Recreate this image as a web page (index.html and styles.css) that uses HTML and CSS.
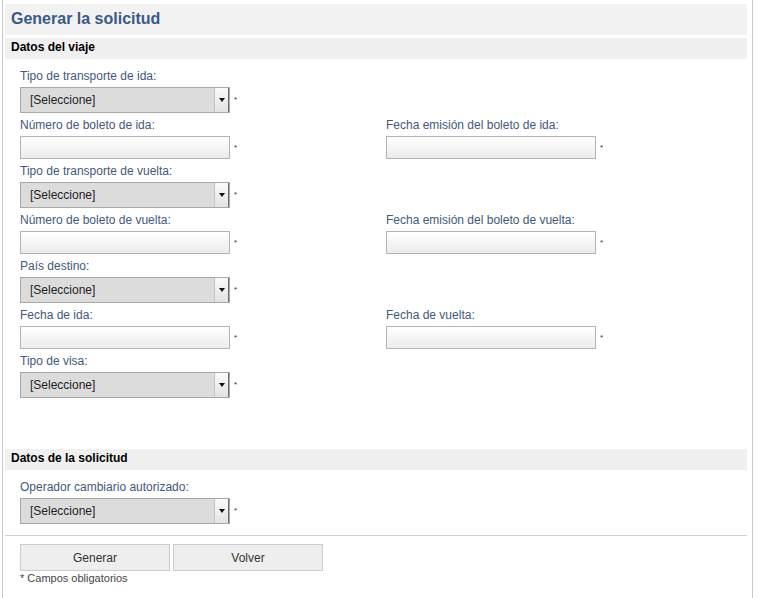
FILE: index.html
```html
<!DOCTYPE html>
<html lang="es">
<head>
<meta charset="utf-8">
<title>Generar la solicitud</title>
<link rel="stylesheet" href="styles.css">
</head>
<body>
<div class="page">
  <h1 class="title">Generar la solicitud</h1>

  <h2 class="section">Datos del viaje</h2>
  <div class="form form-viaje">
    <div class="row">
      <div class="field">
        <label class="lbl">Tipo de transporte de ida:</label>
        <div class="ctl"><div class="select"><span class="sel-text">[Seleccione]</span><span class="arrow"></span></div><span class="req">*</span></div>
      </div>
    </div>
    <div class="row">
      <div class="field">
        <label class="lbl">Número de boleto de ida:</label>
        <div class="ctl"><div class="input"></div><span class="req">*</span></div>
      </div>
      <div class="field">
        <label class="lbl">Fecha emisión del boleto de ida:</label>
        <div class="ctl"><div class="input"></div><span class="req">*</span></div>
      </div>
    </div>
    <div class="row">
      <div class="field">
        <label class="lbl">Tipo de transporte de vuelta:</label>
        <div class="ctl"><div class="select"><span class="sel-text">[Seleccione]</span><span class="arrow"></span></div><span class="req">*</span></div>
      </div>
    </div>
    <div class="row">
      <div class="field">
        <label class="lbl">Número de boleto de vuelta:</label>
        <div class="ctl"><div class="input"></div><span class="req">*</span></div>
      </div>
      <div class="field">
        <label class="lbl">Fecha emisión del boleto de vuelta:</label>
        <div class="ctl"><div class="input"></div><span class="req">*</span></div>
      </div>
    </div>
    <div class="row">
      <div class="field">
        <label class="lbl">País destino:</label>
        <div class="ctl"><div class="select"><span class="sel-text">[Seleccione]</span><span class="arrow"></span></div><span class="req">*</span></div>
      </div>
    </div>
    <div class="row">
      <div class="field">
        <label class="lbl">Fecha de ida:</label>
        <div class="ctl"><div class="input"></div><span class="req">*</span></div>
      </div>
      <div class="field">
        <label class="lbl">Fecha de vuelta:</label>
        <div class="ctl"><div class="input"></div><span class="req">*</span></div>
      </div>
    </div>
    <div class="row">
      <div class="field">
        <label class="lbl">Tipo de visa:</label>
        <div class="ctl"><div class="select"><span class="sel-text">[Seleccione]</span><span class="arrow"></span></div><span class="req">*</span></div>
      </div>
    </div>
  </div>

  <h2 class="section">Datos de la solicitud</h2>
  <div class="form form-solicitud">
    <div class="row">
      <div class="field">
        <label class="lbl">Operador cambiario autorizado:</label>
        <div class="ctl"><div class="select"><span class="sel-text">[Seleccione]</span><span class="arrow"></span></div><span class="req">*</span></div>
      </div>
    </div>
  </div>

  <div class="actions">
    <div class="buttons">
      <button class="btn" type="button">Generar</button>
      <button class="btn" type="button">Volver</button>
    </div>
    <p class="note">* Campos obligatorios</p>
  </div>
</div>
</body>
</html>
```

FILE: styles.css
```css
html, body {
  margin: 0;
  padding: 0;
  background: #ffffff;
}
body {
  font-family: "Liberation Sans", Arial, sans-serif;
  color: #000;
}
.page {
  margin-left: 2px;
  width: 751px;
  min-height: 598px;
  box-sizing: border-box;
  border-left: 1px solid #c8c8c8;
  border-right: 1px solid #c8c8c8;
  padding: 4px 5px 0 2px;
}
.title {
  margin: 0;
  height: 31px;
  line-height: 30px;
  padding-left: 6px;
  background: #f2f2f2;
  border-bottom: 1px solid #ffffff;
  font-size: 16px;
  font-weight: bold;
  color: #3a5a85;
}
.section {
  margin: 2px 0 0 0;
  height: 21px;
  line-height: 19px;
  padding-left: 6px;
  background: #f0f0f0;
  font-size: 12px;
  font-weight: bold;
  color: #000;
}
.form {
  padding-left: 15px;
}
.form-viaje {
  padding-top: 10px;
  padding-bottom: 44px;
}
.form-solicitud {
  padding-top: 10px;
  padding-bottom: 6px;
  border-bottom: 1px solid #cfcfcf;
}
.row {
  display: grid;
  grid-template-columns: 366px 1fr;
  margin-bottom: 5px;
}
.field {
  display: flex;
  flex-direction: column;
}
.lbl {
  font-size: 12px;
  line-height: 14px;
  height: 14px;
  color: #42597a;
  margin-bottom: 4px;
}
.ctl {
  display: flex;
  align-items: center;
}
.req {
  font-size: 8px;
  line-height: 8px;
  margin-left: 4px;
  color: #333;
}
.select {
  width: 210px;
  height: 26px;
  box-sizing: border-box;
  border: 1px solid #a8a8a8;
  background: #dcdcdc;
  display: flex;
  align-items: center;
  position: relative;
}
.sel-text {
  flex: 1;
  font-size: 12px;
  color: #222;
  padding-left: 9px;
}
.arrow {
  width: 15px;
  height: 100%;
  box-sizing: border-box;
  border-left: 1px solid #c4c4c4;
  border-right: 1px solid #6e6e6e;
  background: linear-gradient(#fbfbfb, #e2e2e2);
  display: flex;
  align-items: center;
  justify-content: center;
}
.arrow::after {
  content: "";
  width: 0;
  height: 0;
  border-left: 3px solid transparent;
  border-right: 3px solid transparent;
  border-top: 4px solid #111;
}
.input {
  width: 210px;
  height: 23px;
  box-sizing: border-box;
  border: 1px solid #b4b4b4;
  background: linear-gradient(#ffffff, #ebebeb);
}
.actions {
  padding: 8px 0 0 15px;
}
.buttons {
  display: flex;
  gap: 3px;
}
.btn {
  width: 150px;
  height: 27px;
  margin: 0;
  box-sizing: border-box;
  border: 1px solid #cccccc;
  background: #eeeeee;
  font-family: "Liberation Sans", Arial, sans-serif;
  font-size: 12px;
  color: #333;
  padding: 0;
}
.note {
  margin: 0;
  font-size: 11px;
  line-height: 14px;
  color: #444;
}
```
